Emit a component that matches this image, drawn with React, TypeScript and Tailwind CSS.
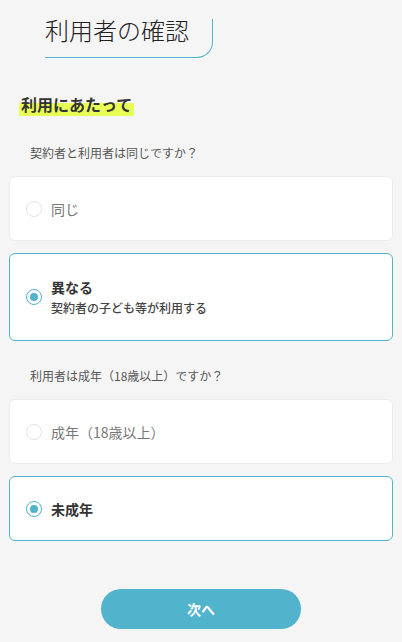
import React, { useState } from "react";

type Option = { label: string; sub?: string };

function RadioCard({
  option,
  selected,
  onClick,
}: {
  option: Option;
  selected: boolean;
  onClick: () => void;
}) {
  return (
    <button
      type="button"
      onClick={onClick}
      className={
        selected
          ? "flex w-full items-center gap-[9px] rounded-[6px] border border-[#52b3cc] bg-white px-[16px] text-left"
          : "flex w-full items-center gap-[9px] rounded-[6px] border border-[#ececec] bg-white px-[16px] text-left"
      }
      style={{ minHeight: option.sub ? 88 : 65 }}
    >
      <span
        className={
          selected
            ? "flex h-[16px] w-[16px] shrink-0 items-center justify-center rounded-full border border-[#52b3cc]"
            : "flex h-[16px] w-[16px] shrink-0 items-center justify-center rounded-full border border-[#e2e2e2]"
        }
      >
        {selected && <span className="h-[8px] w-[8px] rounded-full bg-[#52b3cc]" />}
      </span>
      <span className="flex flex-col">
        <span
          className={
            selected
              ? "text-[14px] font-bold leading-[20px] text-[#333]"
              : "text-[14px] leading-[20px] text-[#777]"
          }
        >
          {option.label}
        </span>
        {option.sub && (
          <span className="mt-[2px] text-[12px] font-medium leading-[18px] text-[#444]">
            {option.sub}
          </span>
        )}
      </span>
    </button>
  );
}

export default function App() {
  const [same, setSame] = useState(1);
  const [adult, setAdult] = useState(1);

  const q1: Option[] = [{ label: "同じ" }, { label: "異なる", sub: "契約者の子ども等が利用する" }];
  const q2: Option[] = [{ label: "成年（18歳以上）" }, { label: "未成年" }];

  return (
    <div
      className="min-h-[642px] bg-[#f5f5f5] px-[9px] pt-[19px] pb-[14px]"
      style={{ fontFamily: '"Noto Sans CJK JP", "Noto Sans", sans-serif' }}
    >
      {/* Page title */}
      <div className="ml-[36px] flex h-[39px] w-[168px] items-start rounded-br-[16px] border-b border-r border-[#52b3cc]">
        <h1 className="-mt-[4px] text-[24px] font-light leading-[30px] text-[#222]">利用者の確認</h1>
      </div>

      {/* Section heading */}
      <h2 className="mt-[36px] ml-[10px] w-fit bg-[linear-gradient(transparent_41%,#eaff55_41%)] px-[2px] pb-[2px] text-[16px] font-bold leading-[20px] text-[#333]">
        利用にあたって
      </h2>

      <p className="mt-[28px] ml-[21px] text-[12px] leading-[18px] text-[#555]">契約者と利用者は同じですか？</p>
      <div className="mt-[14px] flex flex-col gap-[12px]">
        {q1.map((o, i) => (
          <RadioCard key={o.label} option={o} selected={same === i} onClick={() => setSame(i)} />
        ))}
      </div>

      <p className="mt-[26px] ml-[21px] text-[12px] leading-[18px] text-[#555]">利用者は成年（18歳以上）ですか？</p>
      <div className="mt-[14px] flex flex-col gap-[12px]">
        {q2.map((o, i) => (
          <RadioCard key={o.label} option={o} selected={adult === i} onClick={() => setAdult(i)} />
        ))}
      </div>

      <div className="mt-[48px] flex justify-center">
        <button
          type="button"
          className="h-[40px] w-[200px] rounded-full bg-[#52b3cc] text-[14px] font-bold text-white"
        >
          次へ
        </button>
      </div>
    </div>
  );
}
